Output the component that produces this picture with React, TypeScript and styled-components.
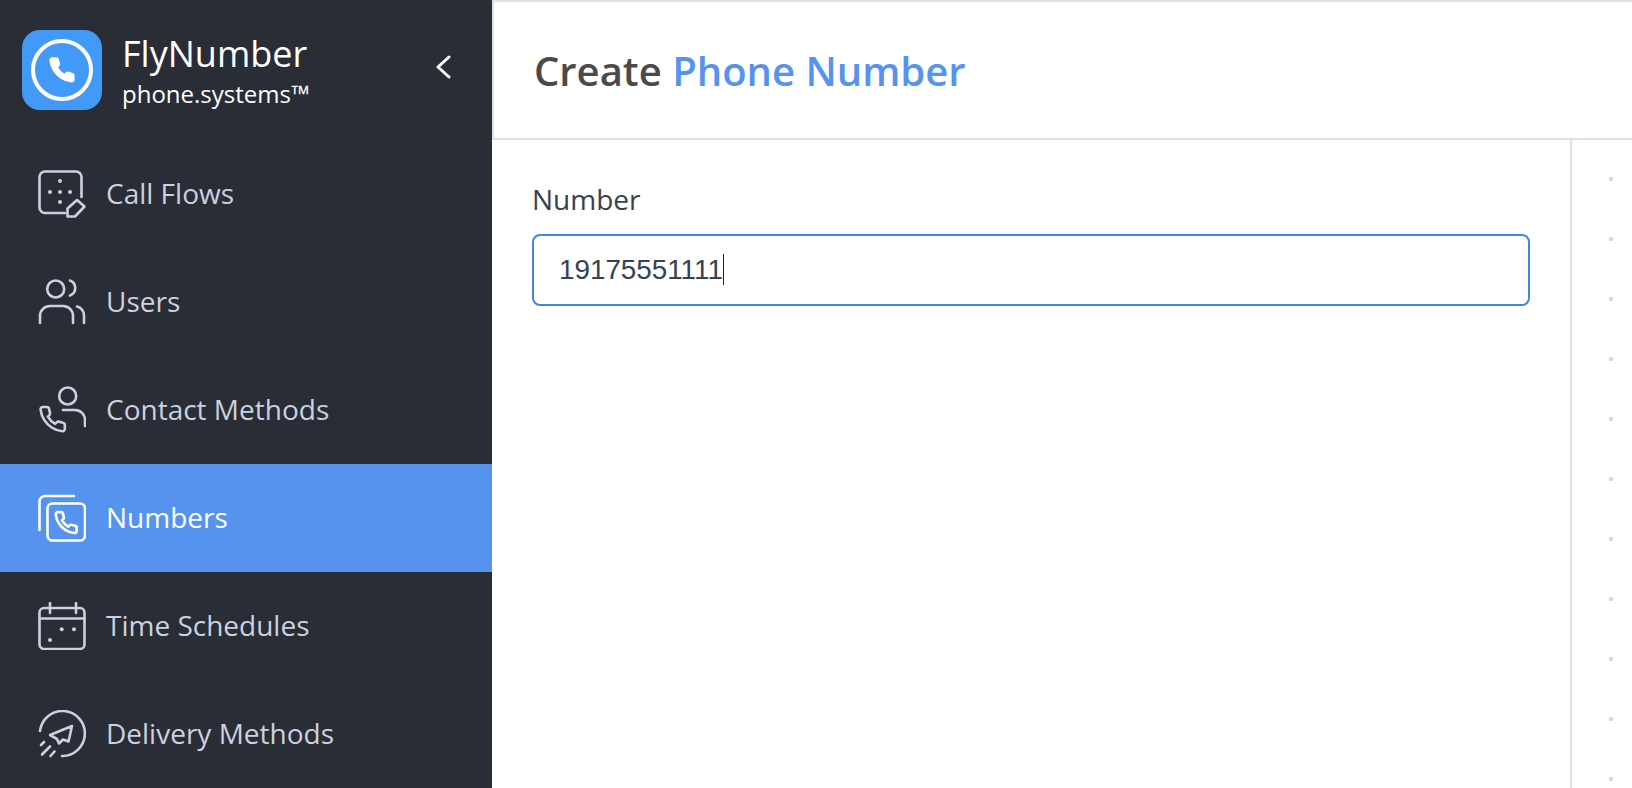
import React from 'react';
import styled, { createGlobalStyle } from 'styled-components';

const PHONE =
  'M22 16.92v3a2 2 0 0 1-2.18 2 19.79 19.79 0 0 1-8.63-3.07 19.5 19.5 0 0 1-6-6 19.79 19.79 0 0 1-3.07-8.67A2 2 0 0 1 4.11 2h3a2 2 0 0 1 2 1.72 12.84 12.84 0 0 0 .7 2.81 2 2 0 0 1-.45 2.11L8.09 9.91a16 16 0 0 0 6 6l1.27-1.27a2 2 0 0 1 2.11-.45 12.84 12.84 0 0 0 2.81.7A2 2 0 0 1 22 16.92z';

const GlobalStyle = createGlobalStyle`
  html, body {
    margin: 0;
    padding: 0;
    height: 100%;
    overflow: hidden;
    background: #fff;
    font-family: "Open Sans", "Noto Sans", sans-serif;
  }
  * { box-sizing: border-box; }
`;

const Icon: React.FC<{ children: React.ReactNode }> = ({ children }) => (
  <IconSvg viewBox="0 0 48 48">{children}</IconSvg>
);

const Dot: React.FC<{ x: number; y: number }> = ({ x, y }) => (
  <circle cx={x} cy={y} r="2" fill="currentColor" stroke="none" />
);

const CallFlowsIcon = () => (
  <Icon>
    <path d="M27 43H7a5.5 5.5 0 0 1-5.5-5.5V7A5.5 5.5 0 0 1 7 1.500h31A5.500 5.500 0 0 1 43.500 7v20" />
    <Dot x={22} y={11} /><Dot x={12} y={22} /><Dot x={22} y={22} /><Dot x={32} y={22} /><Dot x={22} y={32} />
    <path d="M29.500 38.500L39 30l7.500 6.500L37 46.500h-7.500z" />
  </Icon>
);

const UsersIcon = () => (
  <Icon>
    <circle cx="17.700" cy="11" r="8.500" />
    <path d="M32 2.500a8 8 0 0 1 0 15" />
    <path d="M2 45v-7a10 10 0 0 1 10-10h13a10 10 0 0 1 10 10v7" />
    <path d="M39 28.500a9 9 0 0 1 7 9V45" />
  </Icon>
);

const ContactIcon = () => (
  <Icon>
    <circle cx="29.700" cy="10" r="8.500" />
    <path d="M25 24h12a10 10 0 0 1 10 10v6" />
    <g transform="translate(0 18.500) scale(1.220)" strokeWidth="2.130">
      <path d={PHONE} />
    </g>
  </Icon>
);

const NumbersIcon = () => (
  <Icon>
    <path d="M36 2H7a5.500 5.500 0 0 0-5.500 5.500V36" />
    <rect x="9.500" y="9.500" width="37.500" height="37" rx="5" />
    <g transform="translate(15.500 16) scale(1.050)" strokeWidth="2.480">
      <path d={PHONE} />
    </g>
  </Icon>
);

const ScheduleIcon = () => (
  <Icon>
    <rect x="1.500" y="6" width="45" height="41" rx="4.500" />
    <path d="M1.500 16.500h45M12 1v10M38 1v10" />
    <Dot x={23.700} y={27.300} /><Dot x={36} y={27.300} /><Dot x={12} y={38} />
  </Icon>
);

const DeliveryIcon = () => (
  <Icon>
    <path d="M2 21A22.500 22.500 0 1 1 24 46" />
    <path d="M34 16L12 25l7 4 2 4.500 4-4 5.500 2z" />
    <path d="M3 35l3-3M4 44.500l8-8M12.500 46l4-4.500" />
  </Icon>
);

const NAV_ITEMS = [
  { label: 'Call Flows', icon: <CallFlowsIcon /> },
  { label: 'Users', icon: <UsersIcon /> },
  { label: 'Contact Methods', icon: <ContactIcon /> },
  { label: 'Numbers', icon: <NumbersIcon />, active: true },
  { label: 'Time Schedules', icon: <ScheduleIcon /> },
  { label: 'Delivery Methods', icon: <DeliveryIcon /> },
];

const App: React.FC = () => (
  <>
    <GlobalStyle />
    <Page>
      <Sidebar>
        <Brand>
          <Logo viewBox="0 0 80 80">
            <rect width="80" height="80" rx="18" fill="#4299f8" />
            <circle cx="40" cy="40" r="29" fill="none" stroke="#fff" strokeWidth="4" />
            <g transform="translate(25.500 25.500) scale(1.200)">
              <path d={PHONE} fill="#fff" stroke="#fff" strokeWidth="1.200" strokeLinejoin="round" />
            </g>
          </Logo>
          <BrandText>
            <BrandName>FlyNumber</BrandName>
            <BrandSub>phone.systems™</BrandSub>
          </BrandText>
          <Collapse viewBox="0 0 16 24">
            <path d="M14 2L3 12l11 10" />
          </Collapse>
        </Brand>
        <Nav>
          {NAV_ITEMS.map(item => (
            <NavRow key={item.label} $active={item.active}>
              {item.icon}
              <NavLabel>{item.label}</NavLabel>
            </NavRow>
          ))}
        </Nav>
      </Sidebar>
      <Main>
        <Header>
          <Title>
            Create <TitleAccent>Phone Number</TitleAccent>
          </Title>
        </Header>
        <Body>
          <FormPane>
            <Label>Number</Label>
            <Input>
              19175551111
              <Caret />
            </Input>
          </FormPane>
          <DotsPane />
        </Body>
      </Main>
    </Page>
  </>
);

const Page = styled.div`
  display: flex;
  width: 1632px;
  height: 788px;
  overflow: hidden;
`;

const Sidebar = styled.aside`
  width: 492px;
  flex-shrink: 0;
  background: #292d36;
  display: flex;
  flex-direction: column;
`;

const Brand = styled.div`
  height: 140px;
  flex-shrink: 0;
  display: flex;
  align-items: center;
  padding: 0 0 0 22px;
`;

const Logo = styled.svg`
  width: 80px;
  height: 80px;
  flex-shrink: 0;
`;

const BrandText = styled.div`
  margin-left: 20px;
  width: 313px;
  display: flex;
  flex-direction: column;
  color: #fff;
`;

const BrandName = styled.div`
  font-size: 36px;
  line-height: 48px;
`;

const BrandSub = styled.div`
  font-size: 24px;
  line-height: 32px;
  font-weight: 500;
`;

const Collapse = styled.svg`
  width: 16px;
  height: 24px;
  margin-bottom: 7px;
  fill: none;
  stroke: #fff;
  stroke-width: 3;
  stroke-linecap: round;
  stroke-linejoin: round;
`;

const Nav = styled.nav`
  display: flex;
  flex-direction: column;
`;

const NavRow = styled.div<{ $active?: boolean }>`
  height: 108px;
  flex-shrink: 0;
  display: flex;
  align-items: center;
  gap: 20px;
  padding-left: 38px;
  font-size: 28px;
  background: ${props => (props.$active ? '#5593ee' : 'transparent')};
  color: ${props => (props.$active ? '#ffffff' : '#cdd0df')};
  font-weight: ${props => (props.$active ? 500 : 400)};
`;

const NavLabel = styled.span`
  margin-bottom: 2px;
`;

const IconSvg = styled.svg`
  width: 48px;
  height: 48px;
  flex-shrink: 0;
  fill: none;
  stroke: currentColor;
  stroke-width: 2.600;
  stroke-linecap: round;
  stroke-linejoin: round;
`;

const Main = styled.main`
  flex: 1;
  min-width: 0;
  display: flex;
  flex-direction: column;
`;

const Header = styled.header`
  height: 140px;
  flex-shrink: 0;
  display: flex;
  align-items: center;
  padding-left: 40px;
  background: #fff;
  border-top: 2px solid #e0e0ec;
  border-bottom: 2px solid #e0e0ec;
  border-left: 2px solid #e0e0ec;
`;

const Title = styled.h1`
  margin: 0;
  font-size: 40px;
  font-weight: 600;
  color: #4a4a4a;
`;

const TitleAccent = styled.span`
  color: #5593ee;
`;

const Body = styled.div`
  flex: 1;
  min-height: 0;
  display: flex;
`;

const FormPane = styled.section`
  width: 1080px;
  flex-shrink: 0;
  padding: 40px 40px 0;
  border-right: 2px solid #e0e0ec;
`;

const Label = styled.div`
  font-size: 28px;
  line-height: 38px;
  color: #374151;
  margin-bottom: 16px;
`;

const Input = styled.div`
  height: 72px;
  display: flex;
  align-items: center;
  padding-left: 25px;
  padding-bottom: 1px;
  border: 2px solid #4285e8;
  border-radius: 8px;
  font-family: "Liberation Sans", Arial, sans-serif;
  font-size: 27.800px;
  color: #374151;
`;

const Caret = styled.span`
  width: 1.500px;
  height: 31px;
  background: #222;
  margin-left: 0;
`;

const DotsPane = styled.div`
  flex: 1;
  background-color: #fff;
  background-image: radial-gradient(circle, #d8d8d8 2px, transparent 2.500px);
  background-size: 60px 60px;
  background-position: 9px 9px;
`;

export default App;
